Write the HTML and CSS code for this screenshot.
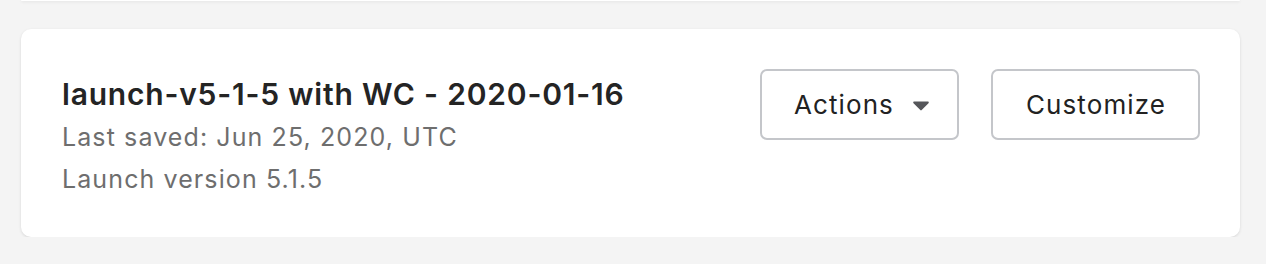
FILE: index.html
```html
<!DOCTYPE html>
<html lang="en">
<head>
<meta charset="utf-8">
<title>Launch configuration</title>
<link rel="stylesheet" href="styles.css">
</head>
<body>
<div class="list">
  <div class="card card-prev"></div>
  <div class="card">
    <div class="info">
      <h2 class="title">launch-v5-1-5 with WC - 2020-01-16</h2>
      <p class="meta">Last saved: Jun 25, 2020, UTC</p>
      <p class="meta">Launch version 5.1.5</p>
    </div>
    <div class="actions">
      <button class="btn btn-menu" type="button"><span>Actions</span>
        <svg class="caret" width="16" height="10" viewBox="0 0 16 10" aria-hidden="true"><path d="M1.2 0.6h13.6c0.9 0 1.3 1 0.7 1.6L8.7 9.1c-0.4 0.4-1 0.4-1.4 0L0.5 2.2C-0.1 1.6 0.3 0.6 1.2 0.6z" fill="#55565a"/></svg>
      </button>
      <button class="btn" type="button">Customize</button>
    </div>
  </div>
</div>
</body>
</html>
```
FILE: styles.css
```css
html, body {
  margin: 0;
  padding: 0;
  background: #f4f4f4;
  font-family: Inter, "Noto Sans", "Liberation Sans", sans-serif;
}

.list {
  display: flex;
  flex-direction: column;
  gap: 28px;
  padding: 0 26px 0 21px;
}

.card {
  background: #fff;
  border-radius: 10px;
  box-shadow: 0 1px 3px rgba(0, 0, 0, 0.12);
  display: flex;
  justify-content: space-between;
  align-items: flex-start;
  padding: 40px 40px 40px 41px;
  height: 208px;
  box-sizing: border-box;
}

.card-prev {
  height: 1px;
  padding: 0;
  border-radius: 0 0 10px 10px;
}

.info {
  display: flex;
  flex-direction: column;
}

.title {
  margin: 5px 0 0;
  font-size: 30px;
  line-height: 40px;
  font-weight: 600;
  color: #242424;
  letter-spacing: 0.8px;
}

.meta {
  margin: 0;
  font-size: 25px;
  line-height: 41.5px;
  color: #6e6e6e;
  letter-spacing: 1.1px;
}

.title + .meta {
  margin-top: 3px;
}

.actions {
  display: flex;
  gap: 32px;
}

.btn {
  display: flex;
  align-items: center;
  justify-content: center;
  height: 71px;
  padding: 0 32px 0 33px;
  background: #fff;
  border: 2px solid #c4c6ca;
  border-radius: 7px;
  font-family: inherit;
  font-size: 26px;
  letter-spacing: 1.1px;
  color: #222;
  cursor: pointer;
}

.btn-menu {
  gap: 19px;
  padding: 0 28px 0 32px;
}

.caret {
  display: block;
  margin-top: 2px;
}
```
